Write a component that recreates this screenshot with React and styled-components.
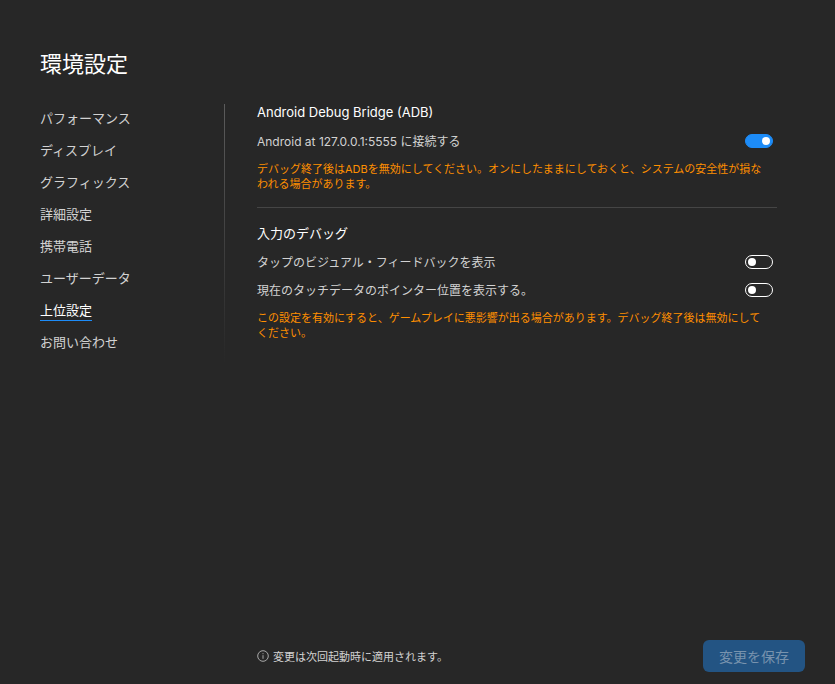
import React from "react";
import styled, { createGlobalStyle } from "styled-components";

const GlobalStyle = createGlobalStyle`
  * {
    box-sizing: border-box;
  }
  body {
    margin: 0;
    background: #272727;
    color: #d2d2d2;
    font-family: Inter, "Noto Sans CJK JP", sans-serif;
  }
`;

const Page = styled.div`
  min-height: 100vh;
  padding: 48px 30px 12px 40px;
  display: flex;
  flex-direction: column;
`;

const Title = styled.h1`
  margin: 0;
  font-size: 22px;
  line-height: 32px;
  font-weight: 400;
  color: #fff;
`;

const Body = styled.div`
  flex: 1;
  display: flex;
  align-items: flex-start;
  margin-top: 24px;
`;

const Nav = styled.nav`
  width: 185px;
  flex-shrink: 0;
  border-right: 1px solid;
  border-image: linear-gradient(#5c5c5c, #272727) 1;
`;

const NavList = styled.ul`
  margin: 0;
  padding: 4px 0 0;
  list-style: none;
`;

const NavItem = styled.li`
  height: 32px;
  display: flex;
  align-items: flex-start;
`;

const NavLink = styled.a`
  font-size: 13px;
  line-height: 20px;
  color: ${(props) => (props.$active ? "#fff" : "#d2d2d2")};
  border-bottom: 1px solid
    ${(props) => (props.$active ? "#1d8cf8" : "transparent")};
  text-decoration: none;
`;

const Content = styled.main`
  flex: 1;
  padding: 0 28px 0 32px;
`;

const Section = styled.section`
  & + & {
    margin-top: 15px;
    padding-top: 17px;
    border-top: 1px solid #454545;
  }
`;

const SectionTitle = styled.h2`
  margin: 0 0 6px;
  font-size: 13px;
  line-height: 17px;
  font-weight: 400;
  color: #fff;
`;

const Row = styled.label`
  height: 28px;
  padding-right: 4px;
  display: flex;
  align-items: center;
  justify-content: space-between;
  font-size: 12px;
  line-height: 17px;
`;

const Switch = styled.input`
  appearance: none;
  width: 28px;
  height: 14px;
  margin: 0;
  padding: 2px;
  display: flex;
  border: 1px solid #fff;
  border-radius: 7px;

  &::before {
    content: "";
    width: 8px;
    height: 8px;
    border-radius: 50%;
    background: #fff;
  }
  &:checked {
    justify-content: flex-end;
    border-color: #1d8cf8;
    background: #1d8cf8;
  }
`;

const Warning = styled.p`
  margin: 7px 0 0;
  padding-right: 8px;
  font-size: 11px;
  line-height: 15px;
  color: #ff8f00;
`;

const Footer = styled.footer`
  padding-left: 217px;
  display: flex;
  align-items: center;
  justify-content: space-between;
`;

const Note = styled.div`
  display: flex;
  align-items: center;
  gap: 4px;
  font-size: 11px;
`;

const SaveButton = styled.button`
  width: 102px;
  height: 32px;
  padding: 0;
  border: none;
  border-radius: 6px;
  background: #235483;
  color: #7893ae;
  font-family: inherit;
  font-size: 14px;
`;

const menu = [
  "パフォーマンス",
  "ディスプレイ",
  "グラフィックス",
  "詳細設定",
  "携帯電話",
  "ユーザーデータ",
  "上位設定",
  "お問い合わせ",
];

function InfoIcon() {
  return (
    <svg width="12" height="12" viewBox="0 0 12 12" fill="none" stroke="#a8a8a8">
      <circle cx="6" cy="6" r="5.3" />
      <path d="M6 5.2v3.6M6 3.2v1" />
    </svg>
  );
}

function Toggle({ text, defaultOn }) {
  const [on, setOn] = React.useState(Boolean(defaultOn));

  return (
    <Row>
      {text}
      <Switch
        type="checkbox"
        checked={on}
        onChange={(e) => setOn(e.target.checked)}
      />
    </Row>
  );
}

function App() {
  const [active, setActive] = React.useState("上位設定");

  const clickHandler = (e, item) => {
    e.preventDefault();
    setActive(item);
  };

  return (
    <Page lang="ja">
      <GlobalStyle />
      <Title>環境設定</Title>
      <Body>
        <Nav>
          <NavList>
            {menu.map((item) => (
              <NavItem key={item}>
                <NavLink
                  href="#"
                  $active={item === active}
                  onClick={(e) => clickHandler(e, item)}
                >
                  {item}
                </NavLink>
              </NavItem>
            ))}
          </NavList>
        </Nav>
        <Content>
          <Section>
            <SectionTitle>Android Debug Bridge (ADB)</SectionTitle>
            <Toggle text="Android at 127.0.0.1:5555 に接続する" defaultOn />
            <Warning>
              デバッグ終了後はADBを無効にしてください。オンにしたままにしておくと、システムの安全性が損なわれる場合があります。
            </Warning>
          </Section>
          <Section>
            <SectionTitle>入力のデバッグ</SectionTitle>
            <Toggle text="タップのビジュアル・フィードバックを表示" />
            <Toggle text="現在のタッチデータのポインター位置を表示する。" />
            <Warning>
              この設定を有効にすると、ゲームプレイに悪影響が出る場合があります。デバッグ終了後は無効にしてください。
            </Warning>
          </Section>
        </Content>
      </Body>
      <Footer>
        <Note>
          <InfoIcon />
          変更は次回起動時に適用されます。
        </Note>
        <SaveButton type="button">変更を保存</SaveButton>
      </Footer>
    </Page>
  );
}

export default App;
